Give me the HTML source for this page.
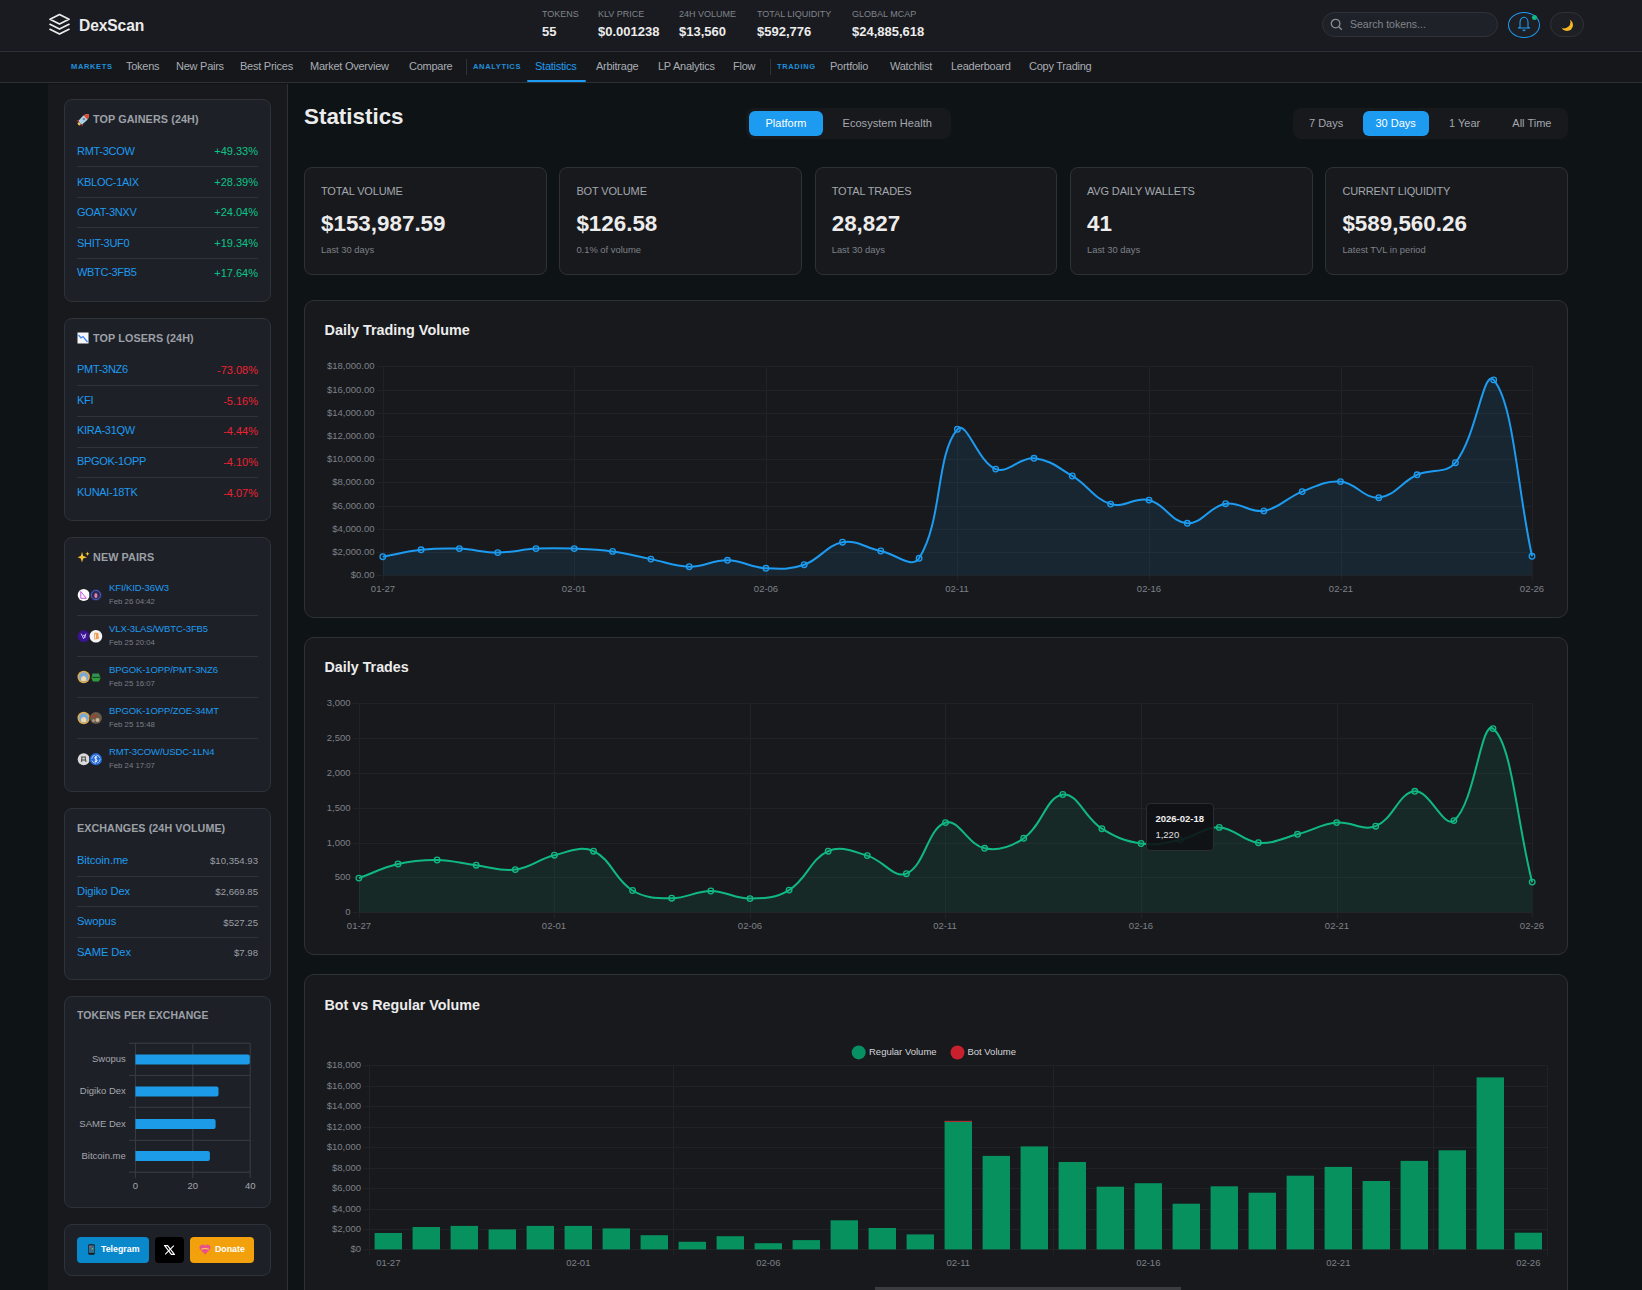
<!DOCTYPE html><html><head><meta charset="utf-8"><style>
*{margin:0;padding:0;box-sizing:border-box}
html,body{width:1642px;height:1290px;overflow:hidden;background:#0e1316;font-family:"Liberation Sans",sans-serif;color:#e8e8e8}
.a{position:absolute;white-space:nowrap}
.ax{font-family:"Liberation Sans",sans-serif;font-size:9.5px;fill:#7d8188}
</style></head><body>
<div class="a" style="left:0;top:0;width:1642px;height:52px;background:#1a1b20;border-bottom:1px solid #2c3138"></div><div class="a" style="left:0;top:52px;width:1642px;height:31px;background:#16171b;border-bottom:1px solid #2c3138"></div><svg class="a" style="left:48px;top:13px" width="23" height="23" viewBox="0 0 23 23" fill="none" stroke="#ececec" stroke-width="1.7" stroke-linejoin="round" stroke-linecap="round">
<path d="M11.5 1.5 L21 6.3 L11.5 11.1 L2 6.3 Z"/><path d="M2 11.3 L11.5 16.1 L21 11.3"/><path d="M2 16.3 L11.5 21.1 L21 16.3"/></svg><div class="a" style="left:79px;top:16px;font-size:15.6px;font-weight:bold;color:#ececec;line-height:20px;letter-spacing:-0.1px">DexScan</div><div class="a" style="left:542px;top:8.5px;font-size:9px;color:#7f848b;line-height:11px">TOKENS</div><div class="a" style="left:542px;top:24px;font-size:13px;font-weight:bold;color:#ececec;line-height:15px">55</div><div class="a" style="left:598px;top:8.5px;font-size:9px;color:#7f848b;line-height:11px">KLV PRICE</div><div class="a" style="left:598px;top:24px;font-size:13px;font-weight:bold;color:#ececec;line-height:15px">$0.001238</div><div class="a" style="left:679px;top:8.5px;font-size:9px;color:#7f848b;line-height:11px">24H VOLUME</div><div class="a" style="left:679px;top:24px;font-size:13px;font-weight:bold;color:#ececec;line-height:15px">$13,560</div><div class="a" style="left:757px;top:8.5px;font-size:9px;color:#7f848b;line-height:11px">TOTAL LIQUIDITY</div><div class="a" style="left:757px;top:24px;font-size:13px;font-weight:bold;color:#ececec;line-height:15px">$592,776</div><div class="a" style="left:852px;top:8.5px;font-size:9px;color:#7f848b;line-height:11px">GLOBAL MCAP</div><div class="a" style="left:852px;top:24px;font-size:13px;font-weight:bold;color:#ececec;line-height:15px">$24,885,618</div><div class="a" style="left:1322px;top:12px;width:176px;height:25px;border-radius:13px;background:#1f2128;border:1px solid #2f3239"></div><svg class="a" style="left:1330px;top:18px" width="13" height="13" viewBox="0 0 13 13" fill="none" stroke="#8a8f96" stroke-width="1.3"><circle cx="5.6" cy="5.6" r="4.3"/><path d="M8.8 8.8 L11.8 11.8"/></svg><div class="a" style="left:1350px;top:18px;font-size:10.5px;color:#80858c;line-height:13px">Search tokens...</div><div class="a" style="left:1508px;top:12px;width:32px;height:26px;border-radius:50%;border:1px solid #1d9bf0;background:#1d1f25"></div><svg class="a" style="left:1516px;top:16px" width="16" height="16" viewBox="0 0 16 16" fill="none" stroke="#1d9bf0" stroke-width="1.1" stroke-linejoin="round"><path d="M4 11.3 L4 6.5 C4 3.6 5.8 1.3 8 1.3 C10.2 1.3 12 3.6 12 6.5 L12 11.3 L13.7 12 L2.3 12 Z"/><path d="M6.6 13.8 L8 14.7 L9.4 13.8"/></svg><div class="a" style="left:1532px;top:15px;width:5px;height:5px;border-radius:50%;background:#10b981"></div><div class="a" style="left:1550px;top:12px;width:34px;height:25px;border-radius:13px;border:1px solid #2f3239;background:#1d1f25"></div><svg class="a" style="left:1560px;top:17px" width="14" height="15" viewBox="0 0 14 15"><defs><mask id="mm"><rect width="14" height="15" fill="#fff"/><circle cx="4.2" cy="5.2" r="6.2" fill="#000"/></mask></defs><circle cx="7" cy="8" r="6" fill="#f5b722" mask="url(#mm)"/></svg><div class="a" style="left:71px;top:62px;width:40px;font-size:7.5px;font-weight:bold;letter-spacing:0.65px;color:#2090dc;line-height:9px">MARKETS</div><div class="a" style="left:126px;top:60px;font-size:11px;color:#a9adb3;line-height:13px;letter-spacing:-0.25px">Tokens</div><div class="a" style="left:176px;top:60px;font-size:11px;color:#a9adb3;line-height:13px;letter-spacing:-0.25px">New Pairs</div><div class="a" style="left:240px;top:60px;font-size:11px;color:#a9adb3;line-height:13px;letter-spacing:-0.25px">Best Prices</div><div class="a" style="left:310px;top:60px;font-size:11px;color:#a9adb3;line-height:13px;letter-spacing:-0.25px">Market Overview</div><div class="a" style="left:409px;top:60px;font-size:11px;color:#a9adb3;line-height:13px;letter-spacing:-0.25px">Compare</div><div class="a" style="left:473px;top:62px;width:47px;font-size:7.5px;font-weight:bold;letter-spacing:0.65px;color:#2090dc;line-height:9px">ANALYTICS</div><div class="a" style="left:535px;top:60px;font-size:11px;color:#1d9bf0;line-height:13px;letter-spacing:-0.25px">Statistics</div><div class="a" style="left:596px;top:60px;font-size:11px;color:#a9adb3;line-height:13px;letter-spacing:-0.25px">Arbitrage</div><div class="a" style="left:658px;top:60px;font-size:11px;color:#a9adb3;line-height:13px;letter-spacing:-0.25px">LP Analytics</div><div class="a" style="left:733px;top:60px;font-size:11px;color:#a9adb3;line-height:13px;letter-spacing:-0.25px">Flow</div><div class="a" style="left:777px;top:62px;width:38px;font-size:7.5px;font-weight:bold;letter-spacing:0.65px;color:#2090dc;line-height:9px">TRADING</div><div class="a" style="left:830px;top:60px;font-size:11px;color:#a9adb3;line-height:13px;letter-spacing:-0.25px">Portfolio</div><div class="a" style="left:890px;top:60px;font-size:11px;color:#a9adb3;line-height:13px;letter-spacing:-0.25px">Watchlist</div><div class="a" style="left:951px;top:60px;font-size:11px;color:#a9adb3;line-height:13px;letter-spacing:-0.25px">Leaderboard</div><div class="a" style="left:1029px;top:60px;font-size:11px;color:#a9adb3;line-height:13px;letter-spacing:-0.25px">Copy Trading</div><div class="a" style="left:466px;top:59px;width:1px;height:16px;background:#2f3239"></div><div class="a" style="left:770px;top:59px;width:1px;height:16px;background:#2f3239"></div><div class="a" style="left:527px;top:80px;width:59px;height:2px;border-radius:1px;background:#1d9bf0"></div><div class="a" style="left:48px;top:84px;width:240px;height:1206px;background:#18191d;border-right:1px solid #2c3138"></div><div class="a" style="left:64px;top:99px;width:207px;height:203px;border-radius:8px;background:#1e2027;border:1px solid #2e3239"></div><svg class="a" style="left:76px;top:111.5px" width="15" height="15" viewBox="0 0 15 15"><g transform="rotate(45 7.5 7.5)"><path d="M5.3 10.5 L3.2 13.2 L5.6 13.2 Z M9.7 10.5 L11.8 13.2 L9.4 13.2 Z" fill="#c9282d"/><ellipse cx="7.5" cy="13.6" rx="1.7" ry="1.4" fill="#f0c05a"/><path d="M4.6 5.5 C4.6 3 6 1.2 7.5 0.2 C9 1.2 10.4 3 10.4 5.5 L10.2 11.3 C10.2 12.8 4.8 12.8 4.8 11.3 Z" fill="#a9d0e3"/><path d="M4.7 4.6 C5 2.6 6.2 1.1 7.5 0.2 C8.8 1.1 10 2.6 10.3 4.6 Z" fill="#e0482b"/><circle cx="7.5" cy="7" r="1.1" fill="#6f7f8a"/></g></svg><div class="a" style="left:93px;top:113px;font-size:10.8px;font-weight:bold;color:#9ca0a7;line-height:12px;letter-spacing:0.1px">TOP GAINERS (24H)</div><div class="a" style="left:77px;top:144.8px;font-size:11px;color:#1d9bf0;line-height:13px;letter-spacing:-0.3px">RMT-3COW</div><div class="a" style="right:1384px;top:145.1px;font-size:11px;color:#0cc488;line-height:13px;letter-spacing:0px">+49.33%</div><div class="a" style="left:77px;top:175.9px;font-size:11px;color:#1d9bf0;line-height:13px;letter-spacing:-0.3px">KBLOC-1AIX</div><div class="a" style="right:1384px;top:176.2px;font-size:11px;color:#0cc488;line-height:13px;letter-spacing:0px">+28.39%</div><div class="a" style="left:77px;top:205.8px;font-size:11px;color:#1d9bf0;line-height:13px;letter-spacing:-0.3px">GOAT-3NXV</div><div class="a" style="right:1384px;top:206.1px;font-size:11px;color:#0cc488;line-height:13px;letter-spacing:0px">+24.04%</div><div class="a" style="left:77px;top:236.5px;font-size:11px;color:#1d9bf0;line-height:13px;letter-spacing:-0.3px">SHIT-3UF0</div><div class="a" style="right:1384px;top:236.8px;font-size:11px;color:#0cc488;line-height:13px;letter-spacing:0px">+19.34%</div><div class="a" style="left:77px;top:266.3px;font-size:11px;color:#1d9bf0;line-height:13px;letter-spacing:-0.3px">WBTC-3FB5</div><div class="a" style="right:1384px;top:266.6px;font-size:11px;color:#0cc488;line-height:13px;letter-spacing:0px">+17.64%</div><div class="a" style="left:77px;top:166px;width:181px;height:1px;background:#30333a"></div><div class="a" style="left:77px;top:197px;width:181px;height:1px;background:#30333a"></div><div class="a" style="left:77px;top:227px;width:181px;height:1px;background:#30333a"></div><div class="a" style="left:77px;top:258px;width:181px;height:1px;background:#30333a"></div><div class="a" style="left:64px;top:318px;width:207px;height:203px;border-radius:8px;background:#1e2027;border:1px solid #2e3239"></div><svg class="a" style="left:77px;top:332px" width="12" height="12" viewBox="0 0 12 12"><rect x="0.5" y="0.5" width="11" height="11" fill="#f4f6f8"/><path d="M1.5 3 L4 6 L6 4.5 L10.5 10" fill="none" stroke="#3b82f6" stroke-width="1.2"/></svg><div class="a" style="left:93px;top:332px;font-size:10.8px;font-weight:bold;color:#9ca0a7;line-height:12px;letter-spacing:0.1px">TOP LOSERS (24H)</div><div class="a" style="left:77px;top:363.2px;font-size:11px;color:#1d9bf0;line-height:13px;letter-spacing:-0.3px">PMT-3NZ6</div><div class="a" style="right:1384px;top:363.9px;font-size:11px;color:#ec2231;line-height:13px;letter-spacing:0px">-73.08%</div><div class="a" style="left:77px;top:394.0px;font-size:11px;color:#1d9bf0;line-height:13px;letter-spacing:-0.3px">KFI</div><div class="a" style="right:1384px;top:394.7px;font-size:11px;color:#ec2231;line-height:13px;letter-spacing:0px">-5.16%</div><div class="a" style="left:77px;top:424.3px;font-size:11px;color:#1d9bf0;line-height:13px;letter-spacing:-0.3px">KIRA-31QW</div><div class="a" style="right:1384px;top:425.0px;font-size:11px;color:#ec2231;line-height:13px;letter-spacing:0px">-4.44%</div><div class="a" style="left:77px;top:455.2px;font-size:11px;color:#1d9bf0;line-height:13px;letter-spacing:-0.3px">BPGOK-1OPP</div><div class="a" style="right:1384px;top:455.9px;font-size:11px;color:#ec2231;line-height:13px;letter-spacing:0px">-4.10%</div><div class="a" style="left:77px;top:486.2px;font-size:11px;color:#1d9bf0;line-height:13px;letter-spacing:-0.3px">KUNAI-18TK</div><div class="a" style="right:1384px;top:486.9px;font-size:11px;color:#ec2231;line-height:13px;letter-spacing:0px">-4.07%</div><div class="a" style="left:77px;top:385px;width:181px;height:1px;background:#30333a"></div><div class="a" style="left:77px;top:416px;width:181px;height:1px;background:#30333a"></div><div class="a" style="left:77px;top:447px;width:181px;height:1px;background:#30333a"></div><div class="a" style="left:77px;top:477px;width:181px;height:1px;background:#30333a"></div><div class="a" style="left:64px;top:537px;width:207px;height:255px;border-radius:8px;background:#1e2027;border:1px solid #2e3239"></div><svg class="a" style="left:77px;top:551px" width="13" height="13" viewBox="0 0 13 13"><path d="M5 1 L6.2 5 L10 6.3 L6.2 7.6 L5 11.5 L3.8 7.6 L0.5 6.3 L3.8 5Z" fill="#f7c531"/><path d="M10.5 0.5 L11.1 2.2 L12.7 2.8 L11.1 3.4 L10.5 5 L9.9 3.4 L8.3 2.8 L9.9 2.2Z" fill="#f7c531"/></svg><div class="a" style="left:93px;top:551.4px;font-size:10.8px;font-weight:bold;color:#9ca0a7;line-height:12px;letter-spacing:0.1px">NEW PAIRS</div><svg class="a" style="left:76px;top:586.9px" width="28" height="16" viewBox="0 0 28 16"><circle cx="7.7" cy="8" r="6" fill="#fbfbfd"/><path d="M4.8 4.5 L4.8 11.3 L10.3 11.3 Z" fill="none" stroke="#c05ad8" stroke-width="1"/><circle cx="19.9" cy="8" r="6.5" fill="#1e2027"/><circle cx="19.9" cy="8" r="6" fill="#2a2a55"/><circle cx="19.9" cy="8" r="4.6" fill="none" stroke="#5066c8" stroke-width="0.9"/><ellipse cx="19.9" cy="8.6" rx="1.6" ry="2.6" fill="#e27db0"/></svg><div class="a" style="left:109px;top:582.1px;font-size:9.5px;color:#1d9bf0;line-height:11px;letter-spacing:-0.1px">KFI/KID-36W3</div><div class="a" style="left:109px;top:596.8px;font-size:7.8px;color:#7a7f86;line-height:9px">Feb 26 04:42</div><div class="a" style="left:77px;top:615px;width:181px;height:1px;background:#30333a"></div><svg class="a" style="left:76px;top:627.9px" width="28" height="16" viewBox="0 0 28 16"><circle cx="7.7" cy="8.3" r="6" fill="#3a1490"/><path d="M5.2 5.6 L7.6 10.8 L10 5.6 M7 7.3 L10 7.3 M7.8 9 L10 9" fill="none" stroke="#c8b8ee" stroke-width="1"/><circle cx="19.9" cy="8.3" r="7" fill="#1e2027"/><circle cx="19.9" cy="8.3" r="6.3" fill="#f4f4f6"/><path d="M18.2 4.8 L21.6 4.8 Q23.2 5.2 22.4 7.8 Q23.6 9 22.6 11 L18.2 11.6 Z" fill="#ef9d55"/><path d="M19.5 6.3 L19.5 10.5" stroke="#f4f4f6" stroke-width="0.9"/></svg><div class="a" style="left:109px;top:623.1px;font-size:9.5px;color:#1d9bf0;line-height:11px;letter-spacing:-0.1px">VLX-3LAS/WBTC-3FB5</div><div class="a" style="left:109px;top:637.8px;font-size:7.8px;color:#7a7f86;line-height:9px">Feb 25 20:04</div><div class="a" style="left:77px;top:656px;width:181px;height:1px;background:#30333a"></div><svg class="a" style="left:76px;top:668.9px" width="28" height="16" viewBox="0 0 28 16"><circle cx="7.7" cy="8" r="6.2" fill="#e0ab48"/><circle cx="7.7" cy="8" r="4.7" fill="#7aa8d8"/><path d="M5 9 Q7.7 5 10.3 9 L10 12 L5.4 12 Z" fill="#f1d8a8"/><path d="M16.5 4.5 L23 4.5 L24.5 9 L23 12.5 L16.8 12.5 L15.5 9 Z" fill="#2f9a3c"/><path d="M16.5 8.4 L24 8.4" stroke="#0d3a14" stroke-width="0.9"/><circle cx="19.8" cy="6.3" r="1.4" fill="#3d7c8a"/></svg><div class="a" style="left:109px;top:664.1px;font-size:9.5px;color:#1d9bf0;line-height:11px;letter-spacing:-0.1px">BPGOK-1OPP/PMT-3NZ6</div><div class="a" style="left:109px;top:678.8px;font-size:7.8px;color:#7a7f86;line-height:9px">Feb 25 16:07</div><div class="a" style="left:77px;top:697px;width:181px;height:1px;background:#30333a"></div><svg class="a" style="left:76px;top:709.9px" width="28" height="16" viewBox="0 0 28 16"><circle cx="7.7" cy="8" r="6.2" fill="#e0ab48"/><circle cx="7.7" cy="8" r="4.7" fill="#7aa8d8"/><path d="M5 9 Q7.7 5 10.3 9 L10 12 L5.4 12 Z" fill="#f1d8a8"/><circle cx="19.9" cy="8" r="6.6" fill="#1e2027"/><circle cx="19.9" cy="8" r="6" fill="#6b5a48"/><path d="M15.5 7 L19 5.5 L20 8" fill="none" stroke="#b23a2a" stroke-width="1.2"/><circle cx="21.5" cy="10" r="2" fill="#c9b89a"/><circle cx="17.5" cy="10.5" r="1.5" fill="#a39580"/></svg><div class="a" style="left:109px;top:705.1px;font-size:9.5px;color:#1d9bf0;line-height:11px;letter-spacing:-0.1px">BPGOK-1OPP/ZOE-34MT</div><div class="a" style="left:109px;top:719.8px;font-size:7.8px;color:#7a7f86;line-height:9px">Feb 25 15:48</div><div class="a" style="left:77px;top:738px;width:181px;height:1px;background:#30333a"></div><svg class="a" style="left:76px;top:750.9px" width="28" height="16" viewBox="0 0 28 16"><circle cx="7.7" cy="8.2" r="6" fill="#d9d9d9"/><path d="M5 6 L10 6 M6 6 L5.6 11 M9 6 L10 11 M5 9 L10 9" fill="none" stroke="#444" stroke-width="1"/><circle cx="19.9" cy="8.2" r="6.6" fill="#1e2027"/><circle cx="19.9" cy="8.2" r="6.1" fill="#2268d6"/><circle cx="19.9" cy="8.2" r="4.2" fill="none" stroke="#cfe0fb" stroke-width="0.8" stroke-dasharray="5 1.6"/><path d="M21.2 6.2 Q19.9 5.4 18.8 6.3 Q18.3 7.5 19.9 8.2 Q21.5 8.9 21 10.1 Q19.9 11 18.6 10.2 M19.9 4.8 L19.9 11.6" fill="none" stroke="#ffffff" stroke-width="0.9"/></svg><div class="a" style="left:109px;top:746.1px;font-size:9.5px;color:#1d9bf0;line-height:11px;letter-spacing:-0.1px">RMT-3COW/USDC-1LN4</div><div class="a" style="left:109px;top:760.8px;font-size:7.8px;color:#7a7f86;line-height:9px">Feb 24 17:07</div><div class="a" style="left:64px;top:808px;width:207px;height:172px;border-radius:8px;background:#1e2027;border:1px solid #2e3239"></div><div class="a" style="left:77px;top:821.5px;font-size:10.7px;font-weight:bold;color:#9ca0a7;line-height:12px;letter-spacing:0.1px">EXCHANGES (24H VOLUME)</div><div class="a" style="left:77px;top:853.6px;font-size:11.2px;color:#1d9bf0;line-height:13px;letter-spacing:-0.1px">Bitcoin.me</div><div class="a" style="right:1384px;top:855.1px;font-size:9.6px;color:#9a9ea5;line-height:11px">$10,354.93</div><div class="a" style="left:77px;top:884.5px;font-size:11.2px;color:#1d9bf0;line-height:13px;letter-spacing:-0.1px">Digiko Dex</div><div class="a" style="right:1384px;top:886.0px;font-size:9.6px;color:#9a9ea5;line-height:11px">$2,669.85</div><div class="a" style="left:77px;top:915.4px;font-size:11.2px;color:#1d9bf0;line-height:13px;letter-spacing:-0.1px">Swopus</div><div class="a" style="right:1384px;top:916.9px;font-size:9.6px;color:#9a9ea5;line-height:11px">$527.25</div><div class="a" style="left:77px;top:945.5px;font-size:11.2px;color:#1d9bf0;line-height:13px;letter-spacing:-0.1px">SAME Dex</div><div class="a" style="right:1384px;top:947.0px;font-size:9.6px;color:#9a9ea5;line-height:11px">$7.98</div><div class="a" style="left:77px;top:876px;width:181px;height:1px;background:#30333a"></div><div class="a" style="left:77px;top:906px;width:181px;height:1px;background:#30333a"></div><div class="a" style="left:77px;top:937px;width:181px;height:1px;background:#30333a"></div><div class="a" style="left:64px;top:996px;width:207px;height:212px;border-radius:8px;background:#1e2027;border:1px solid #2e3239"></div><div class="a" style="left:77px;top:1009.6px;font-size:10.45px;font-weight:bold;color:#9ca0a7;line-height:12px;letter-spacing:0.1px">TOKENS PER EXCHANGE</div><svg class="a" style="left:0;top:0" width="300" height="1290"><line x1="129" y1="1043.2" x2="250.2" y2="1043.2" stroke="#3a3d44" stroke-width="1"/><line x1="129" y1="1075.4" x2="250.2" y2="1075.4" stroke="#3a3d44" stroke-width="1"/><line x1="129" y1="1107.3" x2="250.2" y2="1107.3" stroke="#3a3d44" stroke-width="1"/><line x1="129" y1="1140.3" x2="250.2" y2="1140.3" stroke="#3a3d44" stroke-width="1"/><line x1="129" y1="1172.2" x2="250.2" y2="1172.2" stroke="#3a3d44" stroke-width="1"/><line x1="135.4" y1="1043.2" x2="135.4" y2="1178" stroke="#3a3d44" stroke-width="1"/><line x1="192.8" y1="1043.2" x2="192.8" y2="1178" stroke="#3a3d44" stroke-width="1"/><line x1="250.2" y1="1043.2" x2="250.2" y2="1178" stroke="#3a3d44" stroke-width="1"/><path d="M135.4 1054.5 L247.8 1054.5 Q249.8 1054.5 249.8 1056.5 L249.8 1062.5 Q249.8 1064.5 247.8 1064.5 L135.4 1064.5 Z" fill="#1c9be8"/><text x="125.8" y="1062.2" text-anchor="end" style="font-family:Liberation Sans,sans-serif;font-size:9.5px;fill:#a3a7ad">Swopus</text><path d="M135.4 1086.6 L216.5 1086.6 Q218.5 1086.6 218.5 1088.6 L218.5 1094.6 Q218.5 1096.6 216.5 1096.6 L135.4 1096.6 Z" fill="#1c9be8"/><text x="125.8" y="1094.3" text-anchor="end" style="font-family:Liberation Sans,sans-serif;font-size:9.5px;fill:#a3a7ad">Digiko Dex</text><path d="M135.4 1118.9 L213.6 1118.9 Q215.6 1118.9 215.6 1120.9 L215.6 1126.9 Q215.6 1128.9 213.6 1128.9 L135.4 1128.9 Z" fill="#1c9be8"/><text x="125.8" y="1126.6000000000001" text-anchor="end" style="font-family:Liberation Sans,sans-serif;font-size:9.5px;fill:#a3a7ad">SAME Dex</text><path d="M135.4 1151 L207.9 1151 Q209.9 1151 209.9 1153 L209.9 1159 Q209.9 1161 207.9 1161 L135.4 1161 Z" fill="#1c9be8"/><text x="125.8" y="1158.7" text-anchor="end" style="font-family:Liberation Sans,sans-serif;font-size:9.5px;fill:#a3a7ad">Bitcoin.me</text><text x="135.4" y="1189" text-anchor="middle" style="font-family:Liberation Sans,sans-serif;font-size:9.5px;fill:#a3a7ad">0</text><text x="192.8" y="1189" text-anchor="middle" style="font-family:Liberation Sans,sans-serif;font-size:9.5px;fill:#a3a7ad">20</text><text x="250.2" y="1189" text-anchor="middle" style="font-family:Liberation Sans,sans-serif;font-size:9.5px;fill:#a3a7ad">40</text></svg><div class="a" style="left:64px;top:1224px;width:207px;height:52px;border-radius:8px;background:#1e2027;border:1px solid #2e3239"></div><div class="a" style="left:77px;top:1237px;width:72px;height:26px;border-radius:4px;background:#0a88cc"></div><svg class="a" style="left:88px;top:1244px" width="7" height="11" viewBox="0 0 7 11"><rect x="0.3" y="0.3" width="6.4" height="10.4" rx="1" fill="#1a1a1a"/><rect x="1" y="1.3" width="5" height="7.6" fill="#3a6a8a"/><rect x="1.5" y="2" width="1.4" height="1.4" fill="#e55"/><rect x="3.8" y="4" width="1.4" height="1.4" fill="#5c5"/></svg><div class="a" style="left:101px;top:1244px;font-size:8.8px;font-weight:bold;color:#fff;line-height:11px">Telegram</div><div class="a" style="left:155px;top:1237px;width:29px;height:26px;border-radius:4px;background:#000"></div><svg class="a" style="left:164px;top:1244.5px" width="11" height="10" viewBox="0 0 11 10"><path d="M0.6 0.6 L3.6 0.6 L10.4 9.4 L7.4 9.4 Z" fill="none" stroke="#fff" stroke-width="1.2"/><path d="M9.8 0.6 L1.2 9.4" stroke="#fff" stroke-width="1.1"/></svg><div class="a" style="left:190px;top:1237px;width:64px;height:26px;border-radius:4px;background:#f3a00d"></div><svg class="a" style="left:199px;top:1244px" width="12" height="11" viewBox="0 0 12 11"><path d="M6 10.5 L1.2 5.6 A2.8 2.8 0 0 1 6 1.9 A2.8 2.8 0 0 1 10.8 5.6 Z" fill="#e8518a"/><path d="M2.2 5.2 Q6 3.6 9.8 5.2" fill="none" stroke="#ffd34d" stroke-width="1"/></svg><div class="a" style="left:215px;top:1244px;font-size:8.8px;font-weight:bold;color:#fff;line-height:11px">Donate</div><div class="a" style="left:304px;top:104px;font-size:22.4px;font-weight:bold;color:#ececec;line-height:26px">Statistics</div><div class="a" style="left:746px;top:108px;width:205px;height:31px;border-radius:8px;background:#18191d"></div><div class="a" style="left:749px;top:111px;width:74px;height:25px;border-radius:6px;background:#1d9bf0"></div><div class="a" style="left:765.5px;top:117px;font-size:11px;color:#fff;line-height:13px">Platform</div><div class="a" style="left:842.5px;top:117px;font-size:11.1px;color:#a3a7ad;line-height:13px">Ecosystem Health</div><div class="a" style="left:1293px;top:108px;width:275px;height:31px;border-radius:8px;background:#18191d"></div><div class="a" style="left:1363px;top:111px;width:66px;height:25px;border-radius:6px;background:#1d9bf0"></div><div class="a" style="left:1309px;top:117px;font-size:11px;color:#a3a7ad;line-height:13px">7 Days</div><div class="a" style="left:1375.4px;top:117px;font-size:11px;color:#fff;line-height:13px">30 Days</div><div class="a" style="left:1449px;top:117px;font-size:11px;color:#a3a7ad;line-height:13px">1 Year</div><div class="a" style="left:1512.3px;top:117px;font-size:11px;color:#a3a7ad;line-height:13px">All Time</div><div class="a" style="left:304.0px;top:167px;width:242.6px;height:108px;border-radius:8px;background:#18191d;border:1px solid #2e3138"></div><div class="a" style="left:321.0px;top:185px;font-size:11px;color:#a3a7ad;line-height:13px;letter-spacing:-0.15px">TOTAL VOLUME</div><div class="a" style="left:321.0px;top:211px;font-size:22.4px;font-weight:bold;color:#ececec;line-height:26px">$153,987.59</div><div class="a" style="left:321.0px;top:244px;font-size:9.4px;color:#7d8188;line-height:11px">Last 30 days</div><div class="a" style="left:559.4px;top:167px;width:242.6px;height:108px;border-radius:8px;background:#18191d;border:1px solid #2e3138"></div><div class="a" style="left:576.4px;top:185px;font-size:11px;color:#a3a7ad;line-height:13px;letter-spacing:-0.15px">BOT VOLUME</div><div class="a" style="left:576.4px;top:211px;font-size:22.4px;font-weight:bold;color:#ececec;line-height:26px">$126.58</div><div class="a" style="left:576.4px;top:244px;font-size:9.4px;color:#7d8188;line-height:11px">0.1% of volume</div><div class="a" style="left:814.7px;top:167px;width:242.6px;height:108px;border-radius:8px;background:#18191d;border:1px solid #2e3138"></div><div class="a" style="left:831.7px;top:185px;font-size:11px;color:#a3a7ad;line-height:13px;letter-spacing:-0.15px">TOTAL TRADES</div><div class="a" style="left:831.7px;top:211px;font-size:22.4px;font-weight:bold;color:#ececec;line-height:26px">28,827</div><div class="a" style="left:831.7px;top:244px;font-size:9.4px;color:#7d8188;line-height:11px">Last 30 days</div><div class="a" style="left:1070.0px;top:167px;width:242.6px;height:108px;border-radius:8px;background:#18191d;border:1px solid #2e3138"></div><div class="a" style="left:1087.0px;top:185px;font-size:11px;color:#a3a7ad;line-height:13px;letter-spacing:-0.15px">AVG DAILY WALLETS</div><div class="a" style="left:1087.0px;top:211px;font-size:22.4px;font-weight:bold;color:#ececec;line-height:26px">41</div><div class="a" style="left:1087.0px;top:244px;font-size:9.4px;color:#7d8188;line-height:11px">Last 30 days</div><div class="a" style="left:1325.4px;top:167px;width:242.6px;height:108px;border-radius:8px;background:#18191d;border:1px solid #2e3138"></div><div class="a" style="left:1342.4px;top:185px;font-size:11px;color:#a3a7ad;line-height:13px;letter-spacing:-0.15px">CURRENT LIQUIDITY</div><div class="a" style="left:1342.4px;top:211px;font-size:22.4px;font-weight:bold;color:#ececec;line-height:26px">$589,560.26</div><div class="a" style="left:1342.4px;top:244px;font-size:9.4px;color:#7d8188;line-height:11px">Latest TVL in period</div><div class="a" style="left:304px;top:300px;width:1264px;height:318px;border-radius:10px;background:#18191d;border:1px solid #2e3138"></div><div class="a" style="left:304px;top:637px;width:1264px;height:318px;border-radius:10px;background:#18191d;border:1px solid #2e3138"></div><div class="a" style="left:304px;top:974px;width:1264px;height:326px;border-radius:10px;background:#18191d;border:1px solid #2e3138"></div><div class="a" style="left:324.5px;top:322px;font-size:14.4px;font-weight:bold;color:#ececec;line-height:17px">Daily Trading Volume</div><div class="a" style="left:324.5px;top:659px;font-size:14.3px;font-weight:bold;color:#ececec;line-height:17px">Daily Trades</div><div class="a" style="left:324.5px;top:997px;font-size:14.3px;font-weight:bold;color:#ececec;line-height:17px">Bot vs Regular Volume</div><svg class="a" style="left:0;top:0" width="1642" height="1290"><line x1="376.75" y1="575.5" x2="1532.05" y2="575.5" stroke="#212226" stroke-width="1"/><text x="374.5" y="577.8" text-anchor="end" class="ax">$0.00</text><line x1="376.75" y1="552.5" x2="1532.05" y2="552.5" stroke="#212226" stroke-width="1"/><text x="374.5" y="554.8" text-anchor="end" class="ax">$2,000.00</text><line x1="376.75" y1="529.5" x2="1532.05" y2="529.5" stroke="#212226" stroke-width="1"/><text x="374.5" y="531.8" text-anchor="end" class="ax">$4,000.00</text><line x1="376.75" y1="506.5" x2="1532.05" y2="506.5" stroke="#212226" stroke-width="1"/><text x="374.5" y="508.8" text-anchor="end" class="ax">$6,000.00</text><line x1="376.75" y1="482.5" x2="1532.05" y2="482.5" stroke="#212226" stroke-width="1"/><text x="374.5" y="484.8" text-anchor="end" class="ax">$8,000.00</text><line x1="376.75" y1="459.5" x2="1532.05" y2="459.5" stroke="#212226" stroke-width="1"/><text x="374.5" y="461.8" text-anchor="end" class="ax">$10,000.00</text><line x1="376.75" y1="436.5" x2="1532.05" y2="436.5" stroke="#212226" stroke-width="1"/><text x="374.5" y="438.8" text-anchor="end" class="ax">$12,000.00</text><line x1="376.75" y1="413.5" x2="1532.05" y2="413.5" stroke="#212226" stroke-width="1"/><text x="374.5" y="415.8" text-anchor="end" class="ax">$14,000.00</text><line x1="376.75" y1="390.5" x2="1532.05" y2="390.5" stroke="#212226" stroke-width="1"/><text x="374.5" y="392.8" text-anchor="end" class="ax">$16,000.00</text><line x1="376.75" y1="366.5" x2="1532.05" y2="366.5" stroke="#212226" stroke-width="1"/><text x="374.5" y="368.8" text-anchor="end" class="ax">$18,000.00</text><line x1="383.5" y1="366.3" x2="383.5" y2="581.3" stroke="#212226" stroke-width="1"/><text x="383.0" y="591.8" text-anchor="middle" class="ax">01-27</text><line x1="574.5" y1="366.3" x2="574.5" y2="581.3" stroke="#212226" stroke-width="1"/><text x="574.0" y="591.8" text-anchor="middle" class="ax">02-01</text><line x1="766.5" y1="366.3" x2="766.5" y2="581.3" stroke="#212226" stroke-width="1"/><text x="766.0" y="591.8" text-anchor="middle" class="ax">02-06</text><line x1="957.5" y1="366.3" x2="957.5" y2="581.3" stroke="#212226" stroke-width="1"/><text x="957.0" y="591.8" text-anchor="middle" class="ax">02-11</text><line x1="1149.5" y1="366.3" x2="1149.5" y2="581.3" stroke="#212226" stroke-width="1"/><text x="1149.0" y="591.8" text-anchor="middle" class="ax">02-16</text><line x1="1341.5" y1="366.3" x2="1341.5" y2="581.3" stroke="#212226" stroke-width="1"/><text x="1341.0" y="591.8" text-anchor="middle" class="ax">02-21</text><line x1="1532.5" y1="366.3" x2="1532.5" y2="581.3" stroke="#212226" stroke-width="1"/><text x="1532.0" y="591.8" text-anchor="middle" class="ax">02-26</text><path d="M382.75 556.72 C398.07 553.96 405.62 551.45 421.06 549.82 C436.27 548.21 444.08 548.06 459.37 548.62 C474.73 549.18 482.36 552.62 497.68 552.62 C513.00 552.62 520.62 549.42 535.99 548.62 C551.27 547.82 559.00 548.06 574.30 548.62 C589.64 549.18 597.42 549.34 612.61 551.42 C628.07 553.54 635.59 556.06 650.92 559.12 C666.24 562.18 673.86 566.47 689.23 566.71 C704.51 566.95 712.27 559.99 727.54 560.31 C742.92 560.63 750.40 567.42 765.85 568.31 C781.04 569.18 789.93 569.55 804.16 564.70 C820.58 559.11 826.21 545.13 842.47 542.22 C856.86 539.65 865.40 547.79 880.78 551.02 C896.04 554.22 912.20 569.25 919.09 558.31 C942.85 520.57 935.67 454.62 957.40 429.31 C966.32 418.93 977.90 462.35 995.71 469.08 C1008.55 473.94 1019.14 456.96 1034.02 458.29 C1049.79 459.71 1057.91 467.36 1072.33 475.97 C1088.56 485.67 1093.72 498.73 1110.64 504.05 C1124.36 508.37 1134.79 496.50 1148.95 500.06 C1165.43 504.21 1171.63 522.61 1187.26 523.34 C1202.28 524.04 1209.48 506.27 1225.57 503.65 C1240.13 501.28 1249.29 513.15 1263.88 510.85 C1279.94 508.32 1286.25 497.66 1302.19 491.57 C1316.90 485.94 1325.55 480.38 1340.50 481.57 C1356.19 482.82 1364.03 498.97 1378.81 497.66 C1394.68 496.25 1400.99 482.14 1417.12 474.77 C1431.64 468.14 1446.06 474.28 1455.43 462.68 C1476.70 436.35 1483.45 367.38 1493.74 379.95 C1514.10 404.83 1516.73 485.77 1532.05 556.31 L1532.05 575.3 L382.75 575.3 Z" fill="rgba(29,155,240,0.1)"/><path d="M382.75 556.72 C398.07 553.96 405.62 551.45 421.06 549.82 C436.27 548.21 444.08 548.06 459.37 548.62 C474.73 549.18 482.36 552.62 497.68 552.62 C513.00 552.62 520.62 549.42 535.99 548.62 C551.27 547.82 559.00 548.06 574.30 548.62 C589.64 549.18 597.42 549.34 612.61 551.42 C628.07 553.54 635.59 556.06 650.92 559.12 C666.24 562.18 673.86 566.47 689.23 566.71 C704.51 566.95 712.27 559.99 727.54 560.31 C742.92 560.63 750.40 567.42 765.85 568.31 C781.04 569.18 789.93 569.55 804.16 564.70 C820.58 559.11 826.21 545.13 842.47 542.22 C856.86 539.65 865.40 547.79 880.78 551.02 C896.04 554.22 912.20 569.25 919.09 558.31 C942.85 520.57 935.67 454.62 957.40 429.31 C966.32 418.93 977.90 462.35 995.71 469.08 C1008.55 473.94 1019.14 456.96 1034.02 458.29 C1049.79 459.71 1057.91 467.36 1072.33 475.97 C1088.56 485.67 1093.72 498.73 1110.64 504.05 C1124.36 508.37 1134.79 496.50 1148.95 500.06 C1165.43 504.21 1171.63 522.61 1187.26 523.34 C1202.28 524.04 1209.48 506.27 1225.57 503.65 C1240.13 501.28 1249.29 513.15 1263.88 510.85 C1279.94 508.32 1286.25 497.66 1302.19 491.57 C1316.90 485.94 1325.55 480.38 1340.50 481.57 C1356.19 482.82 1364.03 498.97 1378.81 497.66 C1394.68 496.25 1400.99 482.14 1417.12 474.77 C1431.64 468.14 1446.06 474.28 1455.43 462.68 C1476.70 436.35 1483.45 367.38 1493.74 379.95 C1514.10 404.83 1516.73 485.77 1532.05 556.31" fill="none" stroke="#1d9bf0" stroke-width="2"/><circle cx="382.8" cy="556.7" r="2.8" fill="none" stroke="#1d9bf0" stroke-width="1.3"/><circle cx="421.1" cy="549.8" r="2.8" fill="none" stroke="#1d9bf0" stroke-width="1.3"/><circle cx="459.4" cy="548.6" r="2.8" fill="none" stroke="#1d9bf0" stroke-width="1.3"/><circle cx="497.7" cy="552.6" r="2.8" fill="none" stroke="#1d9bf0" stroke-width="1.3"/><circle cx="536.0" cy="548.6" r="2.8" fill="none" stroke="#1d9bf0" stroke-width="1.3"/><circle cx="574.3" cy="548.6" r="2.8" fill="none" stroke="#1d9bf0" stroke-width="1.3"/><circle cx="612.6" cy="551.4" r="2.8" fill="none" stroke="#1d9bf0" stroke-width="1.3"/><circle cx="650.9" cy="559.1" r="2.8" fill="none" stroke="#1d9bf0" stroke-width="1.3"/><circle cx="689.2" cy="566.7" r="2.8" fill="none" stroke="#1d9bf0" stroke-width="1.3"/><circle cx="727.5" cy="560.3" r="2.8" fill="none" stroke="#1d9bf0" stroke-width="1.3"/><circle cx="765.9" cy="568.3" r="2.8" fill="none" stroke="#1d9bf0" stroke-width="1.3"/><circle cx="804.2" cy="564.7" r="2.8" fill="none" stroke="#1d9bf0" stroke-width="1.3"/><circle cx="842.5" cy="542.2" r="2.8" fill="none" stroke="#1d9bf0" stroke-width="1.3"/><circle cx="880.8" cy="551.0" r="2.8" fill="none" stroke="#1d9bf0" stroke-width="1.3"/><circle cx="919.1" cy="558.3" r="2.8" fill="none" stroke="#1d9bf0" stroke-width="1.3"/><circle cx="957.4" cy="429.3" r="2.8" fill="none" stroke="#1d9bf0" stroke-width="1.3"/><circle cx="995.7" cy="469.1" r="2.8" fill="none" stroke="#1d9bf0" stroke-width="1.3"/><circle cx="1034.0" cy="458.3" r="2.8" fill="none" stroke="#1d9bf0" stroke-width="1.3"/><circle cx="1072.3" cy="476.0" r="2.8" fill="none" stroke="#1d9bf0" stroke-width="1.3"/><circle cx="1110.6" cy="504.1" r="2.8" fill="none" stroke="#1d9bf0" stroke-width="1.3"/><circle cx="1149.0" cy="500.1" r="2.8" fill="none" stroke="#1d9bf0" stroke-width="1.3"/><circle cx="1187.3" cy="523.3" r="2.8" fill="none" stroke="#1d9bf0" stroke-width="1.3"/><circle cx="1225.6" cy="503.7" r="2.8" fill="none" stroke="#1d9bf0" stroke-width="1.3"/><circle cx="1263.9" cy="510.9" r="2.8" fill="none" stroke="#1d9bf0" stroke-width="1.3"/><circle cx="1302.2" cy="491.6" r="2.8" fill="none" stroke="#1d9bf0" stroke-width="1.3"/><circle cx="1340.5" cy="481.6" r="2.8" fill="none" stroke="#1d9bf0" stroke-width="1.3"/><circle cx="1378.8" cy="497.7" r="2.8" fill="none" stroke="#1d9bf0" stroke-width="1.3"/><circle cx="1417.1" cy="474.8" r="2.8" fill="none" stroke="#1d9bf0" stroke-width="1.3"/><circle cx="1455.4" cy="462.7" r="2.8" fill="none" stroke="#1d9bf0" stroke-width="1.3"/><circle cx="1493.7" cy="379.9" r="2.8" fill="none" stroke="#1d9bf0" stroke-width="1.3"/><circle cx="1532.0" cy="556.3" r="2.8" fill="none" stroke="#1d9bf0" stroke-width="1.3"/><line x1="352.85" y1="912.5" x2="1532.15" y2="912.5" stroke="#212226" stroke-width="1"/><text x="350.5" y="914.8" text-anchor="end" class="ax">0</text><line x1="352.85" y1="877.5" x2="1532.15" y2="877.5" stroke="#212226" stroke-width="1"/><text x="350.5" y="879.8" text-anchor="end" class="ax">500</text><line x1="352.85" y1="843.5" x2="1532.15" y2="843.5" stroke="#212226" stroke-width="1"/><text x="350.5" y="845.8" text-anchor="end" class="ax">1,000</text><line x1="352.85" y1="808.5" x2="1532.15" y2="808.5" stroke="#212226" stroke-width="1"/><text x="350.5" y="810.8" text-anchor="end" class="ax">1,500</text><line x1="352.85" y1="773.5" x2="1532.15" y2="773.5" stroke="#212226" stroke-width="1"/><text x="350.5" y="775.8" text-anchor="end" class="ax">2,000</text><line x1="352.85" y1="738.5" x2="1532.15" y2="738.5" stroke="#212226" stroke-width="1"/><text x="350.5" y="740.8" text-anchor="end" class="ax">2,500</text><line x1="352.85" y1="703.5" x2="1532.15" y2="703.5" stroke="#212226" stroke-width="1"/><text x="350.5" y="705.8" text-anchor="end" class="ax">3,000</text><line x1="359.5" y1="703.3" x2="359.5" y2="918.3" stroke="#212226" stroke-width="1"/><text x="359.0" y="928.8" text-anchor="middle" class="ax">01-27</text><line x1="554.5" y1="703.3" x2="554.5" y2="918.3" stroke="#212226" stroke-width="1"/><text x="554.0" y="928.8" text-anchor="middle" class="ax">02-01</text><line x1="750.5" y1="703.3" x2="750.5" y2="918.3" stroke="#212226" stroke-width="1"/><text x="750.0" y="928.8" text-anchor="middle" class="ax">02-06</text><line x1="945.5" y1="703.3" x2="945.5" y2="918.3" stroke="#212226" stroke-width="1"/><text x="945.0" y="928.8" text-anchor="middle" class="ax">02-11</text><line x1="1141.5" y1="703.3" x2="1141.5" y2="918.3" stroke="#212226" stroke-width="1"/><text x="1141.0" y="928.8" text-anchor="middle" class="ax">02-16</text><line x1="1337.5" y1="703.3" x2="1337.5" y2="918.3" stroke="#212226" stroke-width="1"/><text x="1337.0" y="928.8" text-anchor="middle" class="ax">02-21</text><line x1="1532.5" y1="703.3" x2="1532.5" y2="918.3" stroke="#212226" stroke-width="1"/><text x="1532.0" y="928.8" text-anchor="middle" class="ax">02-26</text><path d="M358.85 878.09 C374.49 872.46 381.88 867.74 397.96 864.02 C413.17 860.50 421.45 859.74 437.07 859.98 C452.74 860.22 460.52 863.28 476.18 865.21 C491.80 867.13 500.10 871.54 515.29 869.59 C531.38 867.53 538.30 858.96 554.40 855.17 C569.59 851.60 580.53 845.34 593.51 851.20 C611.82 859.47 614.42 879.55 632.62 890.49 C645.71 898.36 656.07 898.13 671.73 898.23 C687.36 898.32 695.21 890.91 710.84 890.98 C726.50 891.05 734.34 898.76 749.95 898.58 C765.63 898.39 775.90 898.05 789.06 890.08 C807.19 879.10 809.91 859.25 828.17 851.20 C841.20 845.46 852.35 851.30 867.28 855.59 C883.63 860.30 893.84 879.00 906.39 873.70 C925.13 865.79 927.39 828.44 945.50 822.57 C958.68 818.30 967.81 844.96 984.61 848.35 C999.09 851.26 1010.97 847.09 1023.72 838.31 C1042.26 825.55 1046.23 796.53 1062.83 794.49 C1077.52 792.69 1084.60 817.84 1101.94 828.70 C1115.89 837.43 1124.92 841.16 1141.05 843.47 C1156.20 845.64 1164.87 843.06 1180.16 839.92 C1196.15 836.63 1203.80 826.83 1219.27 827.38 C1235.09 827.94 1242.35 841.29 1258.38 842.70 C1273.64 844.05 1282.00 838.26 1297.49 834.27 C1313.29 830.21 1320.65 824.22 1336.60 822.57 C1351.94 820.98 1362.31 831.55 1375.71 826.19 C1393.60 819.04 1398.63 792.44 1414.82 791.29 C1429.92 790.21 1443.66 828.85 1453.93 820.62 C1474.94 803.77 1480.93 719.07 1493.04 728.59 C1512.22 743.67 1516.51 820.72 1532.15 882.13 L1532.15 912.3 L358.85 912.3 Z" fill="rgba(16,185,129,0.1)"/><path d="M358.85 878.09 C374.49 872.46 381.88 867.74 397.96 864.02 C413.17 860.50 421.45 859.74 437.07 859.98 C452.74 860.22 460.52 863.28 476.18 865.21 C491.80 867.13 500.10 871.54 515.29 869.59 C531.38 867.53 538.30 858.96 554.40 855.17 C569.59 851.60 580.53 845.34 593.51 851.20 C611.82 859.47 614.42 879.55 632.62 890.49 C645.71 898.36 656.07 898.13 671.73 898.23 C687.36 898.32 695.21 890.91 710.84 890.98 C726.50 891.05 734.34 898.76 749.95 898.58 C765.63 898.39 775.90 898.05 789.06 890.08 C807.19 879.10 809.91 859.25 828.17 851.20 C841.20 845.46 852.35 851.30 867.28 855.59 C883.63 860.30 893.84 879.00 906.39 873.70 C925.13 865.79 927.39 828.44 945.50 822.57 C958.68 818.30 967.81 844.96 984.61 848.35 C999.09 851.26 1010.97 847.09 1023.72 838.31 C1042.26 825.55 1046.23 796.53 1062.83 794.49 C1077.52 792.69 1084.60 817.84 1101.94 828.70 C1115.89 837.43 1124.92 841.16 1141.05 843.47 C1156.20 845.64 1164.87 843.06 1180.16 839.92 C1196.15 836.63 1203.80 826.83 1219.27 827.38 C1235.09 827.94 1242.35 841.29 1258.38 842.70 C1273.64 844.05 1282.00 838.26 1297.49 834.27 C1313.29 830.21 1320.65 824.22 1336.60 822.57 C1351.94 820.98 1362.31 831.55 1375.71 826.19 C1393.60 819.04 1398.63 792.44 1414.82 791.29 C1429.92 790.21 1443.66 828.85 1453.93 820.62 C1474.94 803.77 1480.93 719.07 1493.04 728.59 C1512.22 743.67 1516.51 820.72 1532.15 882.13" fill="none" stroke="#10b981" stroke-width="2"/><circle cx="358.9" cy="878.1" r="2.8" fill="none" stroke="#10b981" stroke-width="1.3"/><circle cx="398.0" cy="864.0" r="2.8" fill="none" stroke="#10b981" stroke-width="1.3"/><circle cx="437.1" cy="860.0" r="2.8" fill="none" stroke="#10b981" stroke-width="1.3"/><circle cx="476.2" cy="865.2" r="2.8" fill="none" stroke="#10b981" stroke-width="1.3"/><circle cx="515.3" cy="869.6" r="2.8" fill="none" stroke="#10b981" stroke-width="1.3"/><circle cx="554.4" cy="855.2" r="2.8" fill="none" stroke="#10b981" stroke-width="1.3"/><circle cx="593.5" cy="851.2" r="2.8" fill="none" stroke="#10b981" stroke-width="1.3"/><circle cx="632.6" cy="890.5" r="2.8" fill="none" stroke="#10b981" stroke-width="1.3"/><circle cx="671.7" cy="898.2" r="2.8" fill="none" stroke="#10b981" stroke-width="1.3"/><circle cx="710.8" cy="891.0" r="2.8" fill="none" stroke="#10b981" stroke-width="1.3"/><circle cx="750.0" cy="898.6" r="2.8" fill="none" stroke="#10b981" stroke-width="1.3"/><circle cx="789.1" cy="890.1" r="2.8" fill="none" stroke="#10b981" stroke-width="1.3"/><circle cx="828.2" cy="851.2" r="2.8" fill="none" stroke="#10b981" stroke-width="1.3"/><circle cx="867.3" cy="855.6" r="2.8" fill="none" stroke="#10b981" stroke-width="1.3"/><circle cx="906.4" cy="873.7" r="2.8" fill="none" stroke="#10b981" stroke-width="1.3"/><circle cx="945.5" cy="822.6" r="2.8" fill="none" stroke="#10b981" stroke-width="1.3"/><circle cx="984.6" cy="848.3" r="2.8" fill="none" stroke="#10b981" stroke-width="1.3"/><circle cx="1023.7" cy="838.3" r="2.8" fill="none" stroke="#10b981" stroke-width="1.3"/><circle cx="1062.8" cy="794.5" r="2.8" fill="none" stroke="#10b981" stroke-width="1.3"/><circle cx="1101.9" cy="828.7" r="2.8" fill="none" stroke="#10b981" stroke-width="1.3"/><circle cx="1141.1" cy="843.5" r="2.8" fill="none" stroke="#10b981" stroke-width="1.3"/><circle cx="1180.2" cy="839.9" r="2.8" fill="none" stroke="#10b981" stroke-width="1.3"/><circle cx="1219.3" cy="827.4" r="2.8" fill="none" stroke="#10b981" stroke-width="1.3"/><circle cx="1258.4" cy="842.7" r="2.8" fill="none" stroke="#10b981" stroke-width="1.3"/><circle cx="1297.5" cy="834.3" r="2.8" fill="none" stroke="#10b981" stroke-width="1.3"/><circle cx="1336.6" cy="822.6" r="2.8" fill="none" stroke="#10b981" stroke-width="1.3"/><circle cx="1375.7" cy="826.2" r="2.8" fill="none" stroke="#10b981" stroke-width="1.3"/><circle cx="1414.8" cy="791.3" r="2.8" fill="none" stroke="#10b981" stroke-width="1.3"/><circle cx="1453.9" cy="820.6" r="2.8" fill="none" stroke="#10b981" stroke-width="1.3"/><circle cx="1493.0" cy="728.6" r="2.8" fill="none" stroke="#10b981" stroke-width="1.3"/><circle cx="1532.2" cy="882.1" r="2.8" fill="none" stroke="#10b981" stroke-width="1.3"/><line x1="363.3" y1="1249.5" x2="1547.3" y2="1249.5" stroke="#212226" stroke-width="1"/><text x="361" y="1251.8" text-anchor="end" class="ax">$0</text><line x1="363.3" y1="1229.5" x2="1547.3" y2="1229.5" stroke="#212226" stroke-width="1"/><text x="361" y="1231.8" text-anchor="end" class="ax">$2,000</text><line x1="363.3" y1="1209.5" x2="1547.3" y2="1209.5" stroke="#212226" stroke-width="1"/><text x="361" y="1211.8" text-anchor="end" class="ax">$4,000</text><line x1="363.3" y1="1188.5" x2="1547.3" y2="1188.5" stroke="#212226" stroke-width="1"/><text x="361" y="1190.8" text-anchor="end" class="ax">$6,000</text><line x1="363.3" y1="1168.5" x2="1547.3" y2="1168.5" stroke="#212226" stroke-width="1"/><text x="361" y="1170.8" text-anchor="end" class="ax">$8,000</text><line x1="363.3" y1="1147.5" x2="1547.3" y2="1147.5" stroke="#212226" stroke-width="1"/><text x="361" y="1149.8" text-anchor="end" class="ax">$10,000</text><line x1="363.3" y1="1127.5" x2="1547.3" y2="1127.5" stroke="#212226" stroke-width="1"/><text x="361" y="1129.8" text-anchor="end" class="ax">$12,000</text><line x1="363.3" y1="1106.5" x2="1547.3" y2="1106.5" stroke="#212226" stroke-width="1"/><text x="361" y="1108.8" text-anchor="end" class="ax">$14,000</text><line x1="363.3" y1="1086.5" x2="1547.3" y2="1086.5" stroke="#212226" stroke-width="1"/><text x="361" y="1088.8" text-anchor="end" class="ax">$16,000</text><line x1="363.3" y1="1065.5" x2="1547.3" y2="1065.5" stroke="#212226" stroke-width="1"/><text x="361" y="1067.8" text-anchor="end" class="ax">$18,000</text><line x1="369.5" y1="1065.4" x2="369.5" y2="1255.4" stroke="#212226" stroke-width="1"/><line x1="673.5" y1="1065.4" x2="673.5" y2="1255.4" stroke="#212226" stroke-width="1"/><line x1="1053.5" y1="1065.4" x2="1053.5" y2="1255.4" stroke="#212226" stroke-width="1"/><line x1="1433.5" y1="1065.4" x2="1433.5" y2="1255.4" stroke="#212226" stroke-width="1"/><line x1="1547.5" y1="1065.4" x2="1547.5" y2="1255.4" stroke="#212226" stroke-width="1"/><rect x="374.6" y="1233.0" width="27.4" height="16.4" fill="#06915f"/><text x="388.3" y="1266.4" text-anchor="middle" class="ax">01-27</text><rect x="412.6" y="1227.0" width="27.4" height="22.4" fill="#06915f"/><rect x="450.6" y="1225.9" width="27.4" height="23.5" fill="#06915f"/><rect x="488.6" y="1229.4" width="27.4" height="20.0" fill="#06915f"/><rect x="526.6" y="1225.9" width="27.4" height="23.5" fill="#06915f"/><rect x="564.6" y="1225.9" width="27.4" height="23.5" fill="#06915f"/><text x="578.3" y="1266.4" text-anchor="middle" class="ax">02-01</text><rect x="602.6" y="1228.4" width="27.4" height="21.0" fill="#06915f"/><rect x="640.6" y="1235.2" width="27.4" height="14.2" fill="#06915f"/><rect x="678.6" y="1241.8" width="27.4" height="7.6" fill="#06915f"/><rect x="716.6" y="1236.2" width="27.4" height="13.2" fill="#06915f"/><rect x="754.6" y="1243.2" width="27.4" height="6.2" fill="#06915f"/><text x="768.3" y="1266.4" text-anchor="middle" class="ax">02-06</text><rect x="792.6" y="1240.1" width="27.4" height="9.3" fill="#06915f"/><rect x="830.6" y="1220.3" width="27.4" height="29.1" fill="#06915f"/><rect x="868.6" y="1228.0" width="27.4" height="21.4" fill="#06915f"/><rect x="906.6" y="1234.4" width="27.4" height="15.0" fill="#06915f"/><rect x="944.6" y="1120.9" width="27.4" height="128.5" fill="#06915f"/><rect x="944.6" y="1120.9" width="27.4" height="1" fill="#c8202c"/><text x="958.3" y="1266.4" text-anchor="middle" class="ax">02-11</text><rect x="982.6" y="1155.9" width="27.4" height="93.5" fill="#06915f"/><rect x="1020.6" y="1146.4" width="27.4" height="103.0" fill="#06915f"/><rect x="1058.6" y="1162.0" width="27.4" height="87.4" fill="#06915f"/><rect x="1096.6" y="1186.7" width="27.4" height="62.7" fill="#06915f"/><rect x="1134.6" y="1183.2" width="27.4" height="66.2" fill="#06915f"/><text x="1148.3" y="1266.4" text-anchor="middle" class="ax">02-16</text><rect x="1172.6" y="1203.7" width="27.4" height="45.7" fill="#06915f"/><rect x="1210.6" y="1186.3" width="27.4" height="63.1" fill="#06915f"/><rect x="1248.6" y="1192.7" width="27.4" height="56.7" fill="#06915f"/><rect x="1286.6" y="1175.7" width="27.4" height="73.7" fill="#06915f"/><rect x="1324.6" y="1166.9" width="27.4" height="82.5" fill="#06915f"/><text x="1338.3" y="1266.4" text-anchor="middle" class="ax">02-21</text><rect x="1362.6" y="1181.0" width="27.4" height="68.4" fill="#06915f"/><rect x="1400.6" y="1160.9" width="27.4" height="88.5" fill="#06915f"/><rect x="1438.6" y="1150.3" width="27.4" height="99.1" fill="#06915f"/><rect x="1476.6" y="1077.4" width="27.4" height="172.0" fill="#06915f"/><rect x="1514.6" y="1232.7" width="27.4" height="16.7" fill="#06915f"/><text x="1528.3" y="1266.4" text-anchor="middle" class="ax">02-26</text><circle cx="858.7" cy="1052.4" r="7" fill="#079062"/><text x="869" y="1054.8" class="ax" style="fill:#d4d6da">Regular Volume</text><circle cx="957.5" cy="1052.5" r="7" fill="#c8202c"/><text x="967.4" y="1054.8" class="ax" style="fill:#d4d6da">Bot Volume</text></svg><div class="a" style="left:1146px;top:803px;width:68px;height:48px;border-radius:4px;background:rgba(14,17,21,0.9);border:1px solid #2a2d33"></div><div class="a" style="left:1155.4px;top:813px;font-size:9.5px;font-weight:bold;color:#f0f0f0;line-height:11px">2026-02-18</div><div class="a" style="left:1155.4px;top:829px;font-size:9.5px;color:#e0e0e0;line-height:11px">1,220</div><div class="a" style="left:875px;top:1287px;width:306px;height:3px;background:#3b3c3f"></div></body></html>
